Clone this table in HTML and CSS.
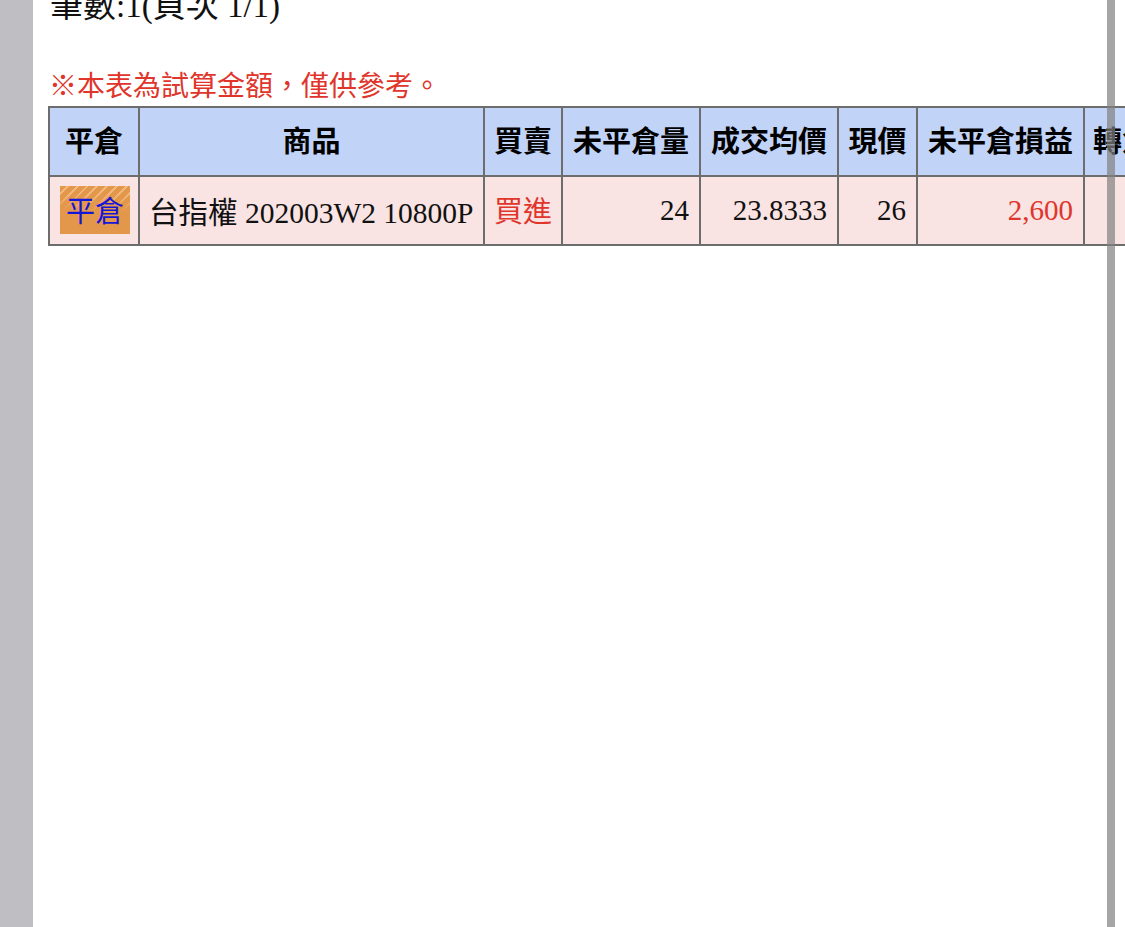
FILE: index.html
```html
<!DOCTYPE html>
<html lang="zh-Hant">
<head>
<meta charset="utf-8">
<title>未平倉</title>
<link rel="stylesheet" href="styles.css">
</head>
<body>
<div class="page">
  <div class="sidebar"></div>
  <main class="main">
    <div class="count">筆數:1(頁次 1/1)</div>
    <div class="note">※本表為試算金額，僅供參考。</div>
    <table class="grid">
      <thead>
        <tr>
          <th class="c1">平倉</th>
          <th class="c2">商品</th>
          <th class="c3">買賣</th>
          <th class="c4">未平倉量</th>
          <th class="c5">成交均價</th>
          <th class="c6">現價</th>
          <th class="c7">未平倉損益</th>
          <th class="c8">轉倉</th>
        </tr>
      </thead>
      <tbody>
        <tr>
          <td class="center"><span class="btn">平倉</span></td>
          <td class="left">台指權 202003W2 10800P</td>
          <td class="center red">買進</td>
          <td class="num">24</td>
          <td class="num">23.8333</td>
          <td class="num">26</td>
          <td class="num red">2,600</td>
          <td></td>
        </tr>
      </tbody>
    </table>
  </main>
  <div class="scrollbar"></div>
</div>
</body>
</html>
```
FILE: styles.css
```css
html, body {
  margin: 0;
  padding: 0;
  background: #ffffff;
}
body {
  width: 1125px;
  height: 927px;
  overflow: hidden;
}
.page {
  display: flex;
  height: 927px;
  position: relative;
}
.sidebar {
  width: 33px;
  flex: none;
  background: #bfbfc3;
}
.main {
  flex: 1;
  overflow: hidden;
  padding-left: 15px;
}
.count {
  margin-top: -11px;
  height: 34px;
  line-height: 34px;
  font-family: "Liberation Serif", "Noto Sans CJK TC", serif;
  font-size: 33px;
  color: #111;
  padding-left: 2px;
  white-space: nowrap;
}
.note {
  margin-top: 44px;
  height: 34px;
  line-height: 34px;
  font-family: "Noto Sans CJK TC", sans-serif;
  font-size: 28px;
  color: #e0352b;
  padding-left: 1px;
  white-space: nowrap;
}
.grid {
  margin-top: 5px;
  table-layout: fixed;
  width: 1127px;
  border-collapse: separate;
  border-spacing: 0;
  border: 1px solid #6d6d6d;
}
.grid th, .grid td {
  box-sizing: border-box;
  border: 1px solid #6d6d6d;
  height: 69px;
  padding: 0 10px;
  vertical-align: middle;
  white-space: nowrap;
  overflow: hidden;
}
.grid th {
  background: #c1d3f7;
  font-family: "Noto Sans CJK TC", sans-serif;
  font-weight: 700;
  font-size: 29px;
  color: #000;
  text-align: center;
  padding: 0 3px 5px;
}
.grid td {
  background: #f9e3e3;
  font-family: "Liberation Serif", "Noto Sans CJK TC", serif;
  font-size: 29px;
  color: #111;
  padding-bottom: 1px;
}
.c1 { width: 90px; }
.c2 { width: 345px; }
.c3 { width: 78px; }
.c4 { width: 138px; }
.c5 { width: 138px; }
.c6 { width: 79px; }
.c7 { width: 167px; }
.c8 { width: 90px; text-align: left !important; padding-left: 8px !important; }
.center { text-align: center; }
.left { text-align: left; }
.grid td.left { padding-left: 9px; font-size: 29.5px; }
.num { text-align: right; }
.red { color: #e0352b !important; }
.grid td.center.red {
  font-family: "Noto Sans CJK TC", sans-serif;
  padding: 0 4px 3px;
}
.btn {
  display: inline-block;
  width: 70px;
  height: 48px;
  line-height: 46px;
  box-sizing: border-box;
  font-family: "Noto Sans CJK TC", sans-serif;
  font-size: 29px;
  color: #1616d8;
  text-align: center;
  vertical-align: middle;
  background:
    linear-gradient(to bottom, rgba(227, 151, 75, 0) 0%, rgba(227, 151, 75, 0) 15%, #e3974b 55%),
    repeating-linear-gradient(-45deg, rgba(255, 210, 160, 0.55) 0 2px, rgba(255, 210, 160, 0) 2px 7px),
    #e3974b;
}
.scrollbar {
  position: absolute;
  left: 1107px;
  top: 0;
  width: 8px;
  height: 927px;
  background: rgba(128, 128, 128, 0.7);
}
```
